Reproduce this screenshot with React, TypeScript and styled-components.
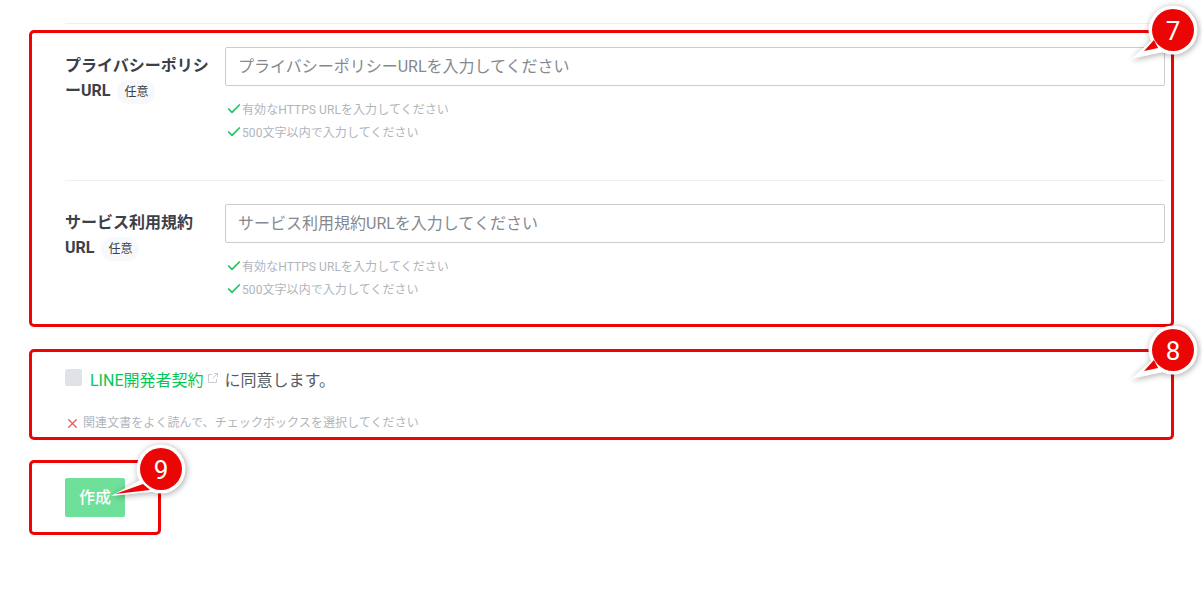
import { Check, X } from "lucide-react";
import styled, { createGlobalStyle } from "styled-components";

const GlobalStyle = createGlobalStyle`
  body {
    margin: 0;
    background: #fff;
    color: #3c4049;
    font-family: Roboto, "Noto Sans CJK JP", sans-serif;
  }
`;

const Page = styled.div`
  width: 1145px;
  padding: 23px 0 54px 29px;
  display: flex;
  flex-direction: column;
`;
const TopRule = styled.hr`
  width: 1100px;
  margin: 0 0 6px 36px;
  border: none;
  border-top: 1px solid #eeeff2;
`;
const Marked = styled.section<{ $inline?: boolean }>`
  position: relative;
  box-sizing: border-box;
  width: ${(p) => (p.$inline ? "132px" : "100%")};
  border: 3px solid #eb0505;
  border-radius: 5px;
  padding: 14px 6px 0 33px;
`;
const UrlBlock = styled(Marked)`
  height: 297px;
  margin-bottom: 22px;
`;
const AgreeBlock = styled(Marked)`
  height: 91px;
  padding-top: 17px;
  margin-bottom: 20px;
`;
const SubmitBlock = styled(Marked)`
  height: 75px;
  padding-top: 15px;
`;
const Row = styled.div`
  display: grid;
  grid-template-columns: 150px 940px;
  column-gap: 10px;
  padding-bottom: 37px;
  & + & {
    border-top: 1px solid #eeeff2;
    padding-top: 23px;
    padding-bottom: 0;
  }
`;
const Label = styled.div`
  padding-top: 6px;
  font-size: 16px;
  font-weight: 700;
  line-height: 25px;
  word-break: break-all;
`;
const Optional = styled.span`
  display: inline-block;
  margin: 2px 0 0 7px;
  padding: 0 7px;
  height: 24px;
  border-radius: 12px;
  background: #f7f8fa;
  font-size: 12px;
  font-weight: 400;
  line-height: 24px;
  vertical-align: top;
`;
const UrlInput = styled.input`
  display: block;
  box-sizing: border-box;
  width: 100%;
  height: 39px;
  padding: 0 12px 1px;
  border: 1px solid #c8ccd3;
  border-radius: 2px;
  font: inherit;
  font-size: 16px;
  &::placeholder {
    color: #85898f;
    opacity: 1;
  }
`;
const Hints = styled.ul`
  list-style: none;
  margin: 11px 0 0;
  padding: 0;
`;
const Hint = styled.li`
  display: flex;
  align-items: center;
  height: 23px;
  margin-left: 1px;
  font-size: 12px;
  letter-spacing: 0.07px;
  color: #b0b5bc;
`;
const Agree = styled.div`
  display: flex;
  align-items: flex-start;
  height: 34px;
`;
const Box = styled.span`
  width: 17px;
  height: 17px;
  border-radius: 2px;
  background: #dfe2e7;
  margin-right: 8px;
`;
const AgreeText = styled.span`
  font-size: 16px;
  line-height: 24px;
  color: #555a63;
`;
const TermsLink = styled.a`
  color: #06c755;
  text-decoration: none;
`;
const LinkIcon = styled.svg`
  width: 12px;
  height: 12px;
  margin: 0 5px 0 4px;
  vertical-align: 2px;
`;
const ErrorLine = styled.div`
  display: flex;
  align-items: center;
  gap: 3px;
  margin-top: 9px;
  font-size: 12px;
  line-height: 23px;
  letter-spacing: 0.07px;
  color: #b0b5bc;
`;
const Submit = styled.button`
  display: block;
  width: 60px;
  height: 39px;
  padding: 0 0 3px;
  border: none;
  border-radius: 2px;
  background: #6ee09a;
  color: #fff;
  font: inherit;
  font-size: 16px;
  font-weight: 500;
`;
const Pin = styled.div<{ $top: number; $right: number }>`
  position: absolute;
  top: ${(p) => p.$top}px;
  right: ${(p) => p.$right}px;
  width: 90px;
  height: 80px;
`;
const PinShape = styled.svg`
  display: block;
  filter: drop-shadow(1px 1px 3px rgba(0, 0, 0, 0.35));
`;
const PinNumber = styled.span`
  position: absolute;
  left: 45px;
  top: 11px;
  width: 40px;
  text-align: center;
  font-size: 26px;
  line-height: 40px;
  color: #fff;
`;

function Callout({
  n,
  top,
  right,
  tip,
}: {
  n: number;
  top: number;
  right: number;
  tip: { white: string; red: string };
}) {
  return (
    <Pin $top={top} $right={right}>
      <PinShape width="90" height="80" viewBox="0 0 90 80">
        <circle cx="65" cy="30" r="24.5" fill="#fff" />
        <polygon points={tip.white} fill="#fff" />
        <circle cx="65" cy="30" r="21" fill="#eb0505" />
        <polygon points={tip.red} fill="#eb0505" />
      </PinShape>
      <PinNumber>{n}</PinNumber>
    </Pin>
  );
}

const shortTip = {
  white: "23,59 44,40 56,52",
  red: "36,51 46,40 50,48",
};
const longTip = {
  white: "15,57 44,41 56,53",
  red: "19,55 47,45 54,51",
};

function UrlRow({ label, rest, placeholder }: { label: string; rest: string; placeholder: string }) {
  return (
    <Row>
      <Label>
        {label}
        <br />
        {rest}
        <Optional>任意</Optional>
      </Label>
      <div>
        <UrlInput placeholder={placeholder} />
        <Hints>
          <Hint>
            <Check size={16} color="#1dc766" strokeWidth={2.6} />
            有効なHTTPS URLを入力してください
          </Hint>
          <Hint>
            <Check size={16} color="#1dc766" strokeWidth={2.6} />
            500文字以内で入力してください
          </Hint>
        </Hints>
      </div>
    </Row>
  );
}

export default function App() {
  return (
    <>
      <GlobalStyle />
      <Page>
        <TopRule />
        <UrlBlock>
          <UrlRow label="プライバシーポリシ" rest="ーURL" placeholder="プライバシーポリシーURLを入力してください" />
          <UrlRow label="サービス利用規約" rest="URL" placeholder="サービス利用規約URLを入力してください" />
          <Callout n={7} top={-33} right={-27} tip={shortTip} />
        </UrlBlock>
        <AgreeBlock>
          <Agree>
            <Box />
            <AgreeText>
              <TermsLink href="#">LINE開発者契約</TermsLink>
              <LinkIcon viewBox="0 0 12 12" fill="none" stroke="#c8ccd3" strokeWidth="1">
                <path d="M5 2.5H1.5v8h8V7M7 1.5h3.5V5M10.5 1.5 5.5 6.5" />
              </LinkIcon>
              に同意します。
            </AgreeText>
          </Agree>
          <ErrorLine>
            <X size={15} color="#ef5a5a" strokeWidth={2.2} />
            関連文書をよく読んで、チェックボックスを選択してください
          </ErrorLine>
          <Callout n={8} top={-32} right={-27} tip={shortTip} />
        </AgreeBlock>
        <SubmitBlock $inline>
          <Submit>作成</Submit>
          <Callout n={9} top={-24} right={-28} tip={longTip} />
        </SubmitBlock>
      </Page>
    </>
  );
}
